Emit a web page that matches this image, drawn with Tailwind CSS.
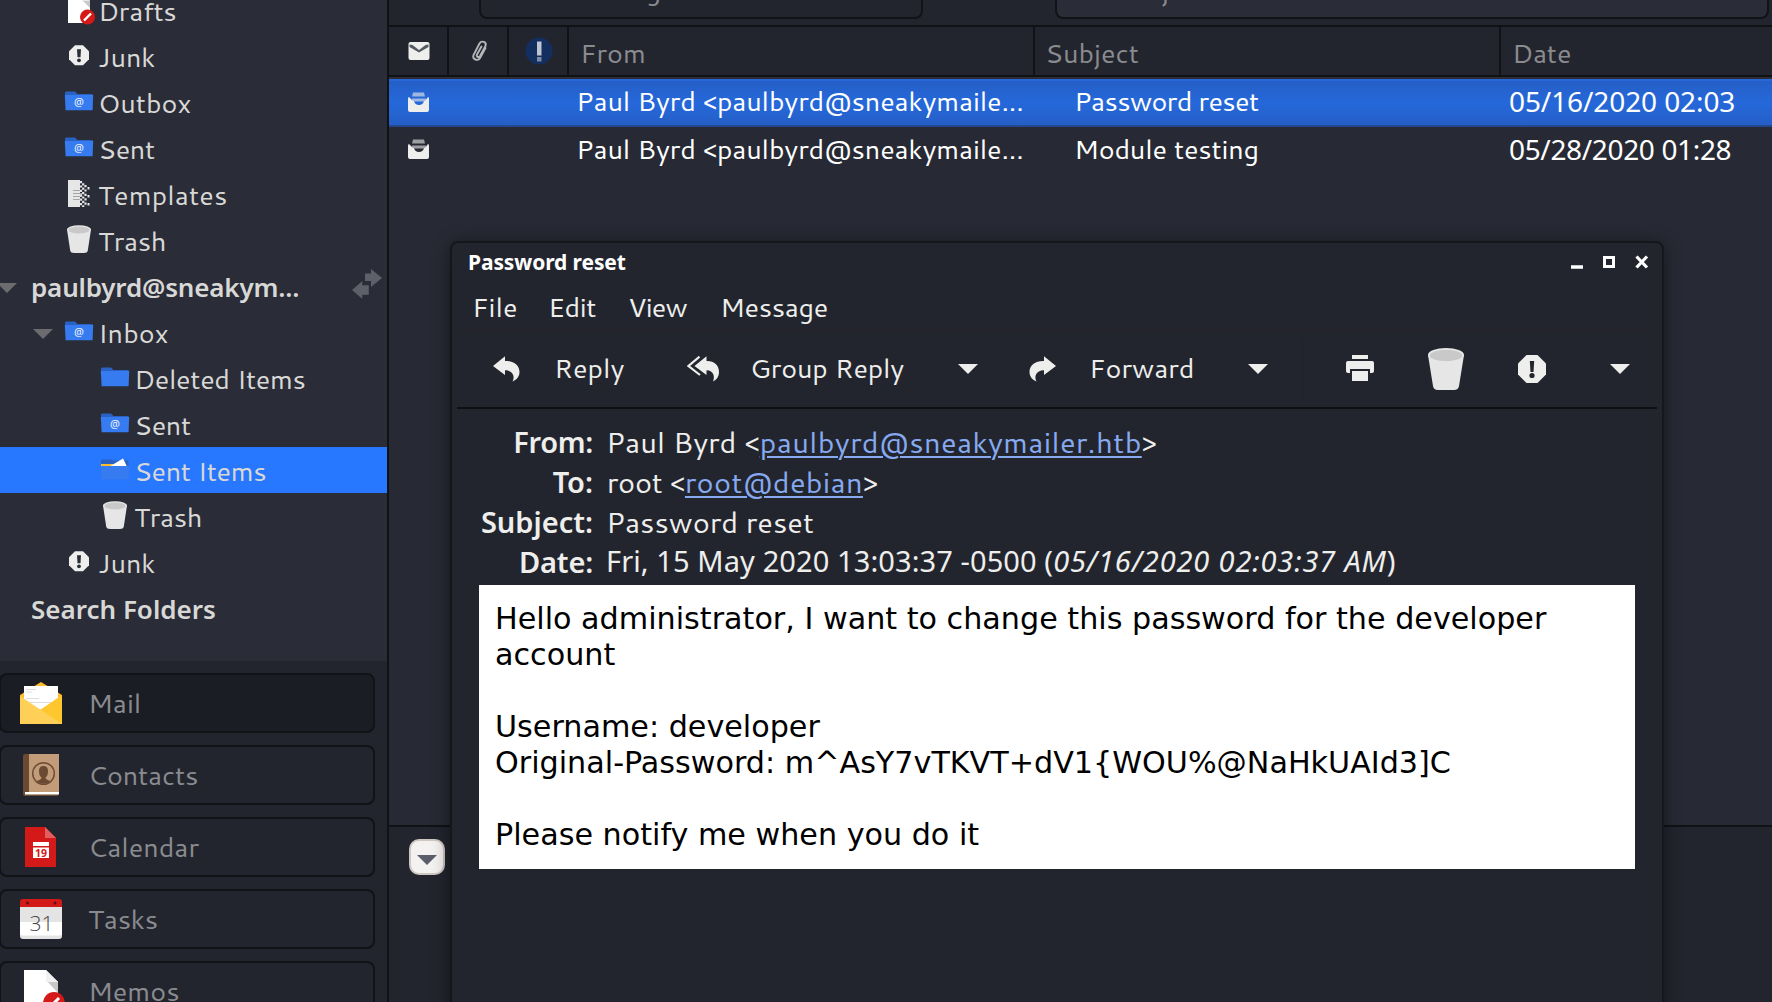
<!DOCTYPE html>
<html lang="en">
<head>
<meta charset="utf-8">
<title>Mail</title>
<script src="https://cdn.jsdelivr.net/npm/@tailwindcss/browser@4"></script>
</head>
<body class="h-[1002px] w-[1772px] overflow-hidden bg-[#22252e] font-[Cantarell,'Noto_Sans',sans-serif] text-[27px] whitespace-nowrap">

<svg class="hidden">
  <symbol id="folder" viewBox="0 0 32 46">
    <path fill="#2a62c4" d="M3 12.5h9l2.5 2.5h15v6H2V13.5z"/><path fill="#367bf0" d="M1.8 16h28.4l-.6 15.2H2.6z"/>
  </symbol>
  <symbol id="mailfolder" viewBox="0 0 32 46">
    <use href="#folder"/><text x="16" y="27.3" text-anchor="middle" font-family="Noto Sans" font-size="11" fill="#f3f6ff">@</text>
  </symbol>
  <symbol id="openfolder" viewBox="0 0 32 46">
    <path fill="#2a62c4" d="M3 12.5h9l2.5 1h15v6H2V13.5z"/><path fill="#fdbc2b" d="M2 17h15v2.500H2z"/><path fill="#fff" d="M10.500 19.500L24 11.500l4 8z"/><path fill="#367bf0" d="M1.8 19h28.4l-.6 13.5H2.6z"/>
  </symbol>
  <symbol id="junk" viewBox="0 0 32 46">
    <path fill="#eeeeec" d="M12 12.300h8l6 6v8l-6 6h-8l-6-6v-8z"/><path fill="#2a2c37" d="M14 16.300h4l-.5 8h-3z"/><circle cx="16" cy="27.300" r="1.900" fill="#2a2c37"/>
  </symbol>
  <symbol id="bin" viewBox="0 0 32 46">
    <path fill="#e6e6e6" d="M4 12.500l3.200 21q.4 2.500 4 2.500h9.600q3.600 0 4-2.500l3.200-21z"/><ellipse cx="16" cy="12.500" rx="12" ry="4.300" fill="#e6e6e6"/><ellipse cx="16" cy="13" rx="10.600" ry="3.500" fill="#c9c9c9"/>
  </symbol>
  <symbol id="draft" viewBox="0 0 32 46">
    <path fill="#fff" d="M5 9h14l8 8v19H5z"/><path fill="#c9c9c9" d="M19 13h8v8z"/><path fill="#e9e9e9" d="M19 9v5h8z"/><circle cx="24.500" cy="30" r="7.500" fill="#d41919"/><path stroke="#fff" stroke-width="2.400" d="M21 33.500l7-7"/>
  </symbol>
  <symbol id="template" viewBox="0 0 32 46">
    <path fill="#e6e6e6" d="M5 9h12v27H5z"/><path stroke="#a5a5a5" d="M10 19.500h9M10 22.500h9M10 25.500h9M10 28.500h9"/>
    <path stroke="#e6e6e6" stroke-width="2.200" stroke-dasharray="2.200 2.200" d="M18 10v26M22.500 14v22"/><path stroke="#e6e6e6" stroke-width="2.200" stroke-dasharray="2.200 2.200" d="M20.200 12.200V36"/><path stroke="#e6e6e6" stroke-width="2" stroke-dasharray="2.500 5.500" d="M25.500 16v19"/>
  </symbol>
  <symbol id="envopen" viewBox="0 0 24 24">
    <path fill="#eeeeec" d="M3 7l4 4h1q1 4 5 4t5-4h1l3-4q1 0 1 2v11q0 2-2 2H4q-2 0-2-2V9q0-2 1-2z"/><path fill="#eeeeec" fill-opacity=".6" d="M7 2.500h11l1 4H6zM6 8.500h14v3H6z"/>
  </symbol>
</svg>

<div class="flex h-full">
  <aside class="flex h-full w-[389px] shrink-0 flex-col overflow-hidden border-r-2 border-[#101216]">
    <nav class="h-[661px] shrink-0 overflow-hidden bg-[#2a2c37] text-[#d8d8d6]">
      <div class="-mt-[13px] leading-[48px]">
        <div class="flex h-[46px] pl-[63px]"><svg class="mr-[3px] h-[46px] w-8"><use href="#draft"/></svg><span class="tracking-[-0.3px]">Drafts</span></div>
        <div class="flex h-[46px] pl-[63px]"><svg class="mr-[3px] h-[46px] w-8"><use href="#junk"/></svg><span class="tracking-[-0.1px]">Junk</span></div>
        <div class="flex h-[46px] pl-[63px]"><svg class="mr-[3px] h-[46px] w-8"><use href="#mailfolder"/></svg><span>Outbox</span></div>
        <div class="flex h-[46px] pl-[63px]"><svg class="mr-[3px] h-[46px] w-8"><use href="#mailfolder"/></svg><span class="tracking-[-0.3px]">Sent</span></div>
        <div class="flex h-[46px] pl-[63px]"><svg class="mr-[3px] h-[46px] w-8"><use href="#template"/></svg><span class="tracking-[0.1px]">Templates</span></div>
        <div class="flex h-[46px] pl-[63px]"><svg class="mr-[3px] h-[46px] w-8"><use href="#bin"/></svg><span class="tracking-[-0.3px]">Trash</span></div>
        <div class="flex h-[46px]"><svg class="h-[46px] w-[31px]"><path fill="#6c6c70" d="M-3 20h20L7 30z"/></svg><span class="w-[321px] font-['Noto_Sans'] text-[26px] font-semibold tracking-[-0.18px]">paulbyrd@sneakym...</span><svg class="h-[46px] w-[31px]" fill="#5d6069"><path d="M13 10.500h6V6l11 9-11 9v-6h-6z"/><path stroke="#2a2c37" stroke-width="1.500" d="M-1 27l12-10.500v5h6.500v11H11v5z"/></svg></div>
        <div class="flex h-[46px]"><svg class="h-[46px] w-[63px]"><path fill="#6c6c70" d="M33 20h20L43 30z"/></svg><svg class="mr-[3px] h-[46px] w-8"><use href="#mailfolder"/></svg><span>Inbox</span></div>
        <div class="flex h-[46px] pl-[99px]"><svg class="mr-[3px] h-[46px] w-8"><use href="#folder"/></svg><span class="tracking-[-0.35px]">Deleted Items</span></div>
        <div class="flex h-[46px] pl-[99px]"><svg class="mr-[3px] h-[46px] w-8"><use href="#mailfolder"/></svg><span class="tracking-[-0.3px]">Sent</span></div>
        <div class="flex h-[46px] bg-[#2777ff] pl-[99px]"><svg class="mr-[3px] h-[46px] w-8"><use href="#openfolder"/></svg><span class="tracking-[-0.4px]">Sent Items</span></div>
        <div class="flex h-[46px] pl-[99px]"><svg class="mr-[3px] h-[46px] w-8"><use href="#bin"/></svg><span class="tracking-[-0.3px]">Trash</span></div>
        <div class="flex h-[46px] pl-[63px]"><svg class="mr-[3px] h-[46px] w-8"><use href="#junk"/></svg><span class="tracking-[-0.1px]">Junk</span></div>
        <div class="h-[46px] pl-[31px] font-['Noto_Sans'] text-[26px] font-semibold">Search Folders</div>
      </div>
    </nav>
    <div class="-ml-px flex w-[376px] flex-col gap-3 pt-3 text-[#8a8b8e]">
      <div class="flex h-[60px] shrink-0 items-center rounded-lg border-2 border-[#111317] bg-[#1b1d24] pl-[19px]">
        <svg class="mr-[26px] size-[42px]" viewBox="0 0 42 42"><path fill="#fdbc2b" d="M21 0l21 13v29H0V13z"/><path fill="#fff" d="M4 4h34v20L21 32 4 24z"/><path stroke="#ddd" d="M6 7.500h10M6 10h6M6 16.500h13M9 20.500h24"/><path fill="#ffc72e" d="M42 13v29L20 28z"/><path fill="#ffd057" d="M0 14l42 28H0z"/></svg><span>Mail</span>
      </div>
      <div class="flex h-[60px] shrink-0 items-center rounded-lg border-2 border-[#111317] pl-[19px]">
        <svg class="mr-[26px] size-[42px]" viewBox="0 0 42 42"><path fill="#6a4a33" d="M3 2q0-2 2-2h33v42H5q-2 0-2-2z"/><path fill="#c29b78" d="M9 0h30v38H9z"/><path fill="#fff" d="M5 38h34v2.500H5z"/><circle cx="23.500" cy="19.500" r="10.800" fill="none" stroke="#6a4a33" stroke-width="1.400"/><path fill="#6a4a33" d="M23.500 12q4.500 0 4.500 5t-2.500 6.500q0 2 5 3.500a10 10 0 0 1-14 0q5-1.500 5-3.500Q19 22 19 17t4.500-5z"/></svg><span class="tracking-[-0.2px]">Contacts</span>
      </div>
      <div class="flex h-[60px] shrink-0 items-center rounded-lg border-2 border-[#111317] pl-[19px]">
        <svg class="mr-[26px] size-[42px]" viewBox="0 0 42 42"><path fill="#d41919" d="M5 1h20l11 11v29H5z"/><path fill="#e35f5f" d="M25 1l11 11H25z"/><path fill="#fff" d="M13 16h16v4H13zM13 21.500h16V32H13z"/><text x="21" y="31" text-anchor="middle" font-family="Noto Sans" font-weight="700" font-size="10.500" fill="#d41919">19</text></svg><span>Calendar</span>
      </div>
      <div class="flex h-[60px] shrink-0 items-center rounded-lg border-2 border-[#111317] pl-[19px]">
        <svg class="mr-[26px] size-[42px]" viewBox="0 0 42 42"><path fill="#e4e4e4" d="M0 8h42v30q0 3-3 3H3q-3 0-3-3z"/><path fill="#fff" d="M0 24h42l.5 10q0 3-3 3.500h-37q-3-.5-3-3.500z"/><path fill="#d41919" d="M0 4q0-3 3-3h36q3 0 3 3v5H0z"/><circle cx="7.500" cy="5" r="1.500" fill="#601010"/><circle cx="35" cy="5" r="1.500" fill="#601010"/><text x="21.500" y="33" text-anchor="middle" font-family="Open Sans" font-weight="300" font-size="21" fill="#444">31</text></svg><span class="tracking-[-0.2px]">Tasks</span>
      </div>
      <div class="flex h-[60px] shrink-0 items-center rounded-lg border-2 border-[#111317] pl-[19px]">
        <svg class="mr-[26px] size-[42px] overflow-visible" viewBox="0 0 42 42"><path fill="#fff" d="M4 0h22l12 12v30H4z"/><path fill="#c9c9c9" d="M26 10l12 1v12z"/><path fill="#f0f0f0" d="M26 0v12h12z"/><circle cx="34" cy="33" r="11" fill="#d41919"/><path stroke="#fff" stroke-width="3" d="M29 38l10-10"/></svg><span>Memos</span>
      </div>
    </div>
  </aside>

  <main class="flex min-w-0 flex-1 flex-col bg-[#272a34]">
    <div class="flex h-[25px] shrink-0 overflow-hidden bg-[#22252e] pl-[90px] text-[#8a8b8e]">
      <div class="-mt-[41px] mr-[132px] h-[60px] w-[444px] shrink-0 rounded-lg border-2 border-[#111317] pl-[44px] leading-[56px]">All Messages</div>
      <div class="-mt-[41px] h-[60px] w-[714px] shrink-0 rounded-lg border-2 border-[#111317] bg-[#2a2c37] pl-[56px] leading-[57px]">Subject or Addresses contain</div>
    </div>
    <div class="flex h-[52px] shrink-0 border-y-2 border-[#101216] bg-[#22252e] leading-[51px] text-[#8a8b8e]">
      <div class="flex w-15 shrink-0 items-center border-r-2 border-[#101216] pl-[17px]"><svg class="size-6" viewBox="0 0 24 24"><rect x="2.500" y="3" width="21" height="18" rx="2" fill="#eeeeec"/><path fill="#555962" d="M3.500 5.500l3 .5 6.500 5 6.500-5 3-.5v2.500L13 13.500 3.500 8z"/></svg></div>
      <div class="flex w-15 shrink-0 items-center border-r-2 border-[#101216] pl-[18px]"><svg class="size-6" viewBox="0 0 24 24" fill="none" stroke="#b5b6b8" stroke-width="1.900" stroke-linecap="round"><path d="M18.500 9l-5.500 10c-2 3.500-8 1.500-6.500-3L12.500 4.500c2-3.500 7.500-1.500 6 2.500l-5.500 10c-1.500 2-4 .8-3-1.500l4.500-8"/></svg></div>
      <div class="flex w-15 shrink-0 items-center border-r-2 border-[#101216] pl-4"><svg class="size-7" viewBox="0 0 28 28"><circle cx="14" cy="14" r="13.500" fill="#132f5f"/><path fill="#c0c5d0" d="M12 4.500h4.500v14H12z"/><path fill="#7f8aa3" d="M12 20h4.500v4.500H12z"/></svg></div>
      <div class="w-[466px] shrink-0 border-r-2 border-[#101216] pl-[11px]">From</div>
      <div class="w-[466px] shrink-0 border-r-2 border-[#101216] pl-[10px]">Subject</div>
      <div class="pl-[11px] tracking-[-0.2px]">Date</div>
    </div>
    <div class="h-[2px] shrink-0 bg-[#2c2d35]"></div>
    <div class="flex h-12 shrink-0 border-t-2 border-b-2 border-t-[#2668da] border-b-[#24488f] bg-linear-to-b from-[#255fc7] via-[#2568da] to-[#255fc7] leading-[40px] text-white">
      <svg class="mt-[9px] ml-[17px] mr-[146px] size-6"><use href="#envopen"/></svg>
      <span class="w-[498px] tracking-[-0.15px]">Paul Byrd &lt;paulbyrd@sneakymaile...</span>
      <span class="w-[435px] tracking-[-0.65px]">Password reset</span>
      <span class="font-['Noto_Sans'] text-[28px] tracking-[-0.1px]">05/16/2020 02:03</span>
    </div>
    <div class="flex h-12 shrink-0 leading-[44px] text-white">
      <svg class="mt-[10px] ml-[17px] mr-[146px] size-6"><use href="#envopen"/></svg>
      <span class="w-[498px] tracking-[-0.15px]">Paul Byrd &lt;paulbyrd@sneakymaile...</span>
      <span class="w-[435px] tracking-[-0.2px]">Module testing</span>
      <span class="font-['Noto_Sans'] text-[28px] tracking-[-0.35px]">05/28/2020 01:28</span>
    </div>
    <div class="h-[650px] shrink-0"></div>
    <div class="flex-1 border-t-2 border-[#101216] bg-[#22252e] pt-3 pl-5">
      <svg class="size-9" viewBox="0 0 36 36"><rect x="1" y="1" width="34" height="34" rx="9" fill="#f3f2f1" stroke="#cdc6c1" stroke-width="2"/><path fill="#5a5e6b" d="M8 16h20L18 26z"/></svg>
    </div>
  </main>
</div>

<section class="absolute top-[241px] left-[450px] h-[780px] w-[1214px] rounded-t-lg border-2 border-[#15171c] bg-[#22252e] px-[5px] text-[#eeeeec] shadow-[0_2px_18px_rgba(0,0,0,0.45)]">
  <header class="flex h-10 items-center pl-[11px] text-white">
    <h1 class="flex-1 font-['Noto_Sans'] text-[21px] font-bold tracking-[-0.1px]">Password reset</h1>
    <svg class="mr-[7px] mb-[2px] h-5 w-[80px]" viewBox="0 0 80 20" fill="none" stroke="#fff"><path stroke-width="3.500" d="M1 15h12"/><path stroke-width="3" d="M34.500 5.500h9v9h-9z"/><path stroke-width="3.200" d="M66.500 4.500l10.500 11M77 4.500L66.500 15.500"/></svg>
  </header>
  <div class="flex h-[46px] pl-[15px] leading-[48px]">
    <span class="w-[76px] tracking-[0.1px]">File</span><span class="w-[80px] tracking-[-0.4px]">Edit</span><span class="w-[92px] tracking-[-0.8px]">View</span><span class="tracking-[-0.35px]">Message</span>
  </div>
  <div class="flex h-20 items-center border-t-2 border-b-2 border-t-[#25242c] border-b-[#0f1014] pl-[36px]">
    <svg class="mr-[33px] h-[26px] w-[28px]" viewBox="0 0 28 26" fill="#eeeeec"><path d="M0 10L12 .3V5c8.500-.3 14.500 4 14.500 11 0 4.500-3 8-7 9.500C22 21 20.500 14.500 12 14.300V19z"/></svg>
    <span class="-mt-px w-[133px]">Reply</span>
    <svg class="mr-[31px] h-[26px] w-8" viewBox="0 0 32 26" fill="#eeeeec"><path d="M7.500 10L19.500.3V5c7.500-.3 12.500 4 12.500 11 0 4.500-2.500 8-6 9.500C28 21 27 14.500 19.500 14.300V19z"/><path fill="none" stroke="#eeeeec" stroke-width="2.200" d="M12.500.7L1.500 10l11.500 9"/></svg>
    <span class="-mt-px w-[208px] tracking-[-0.2px]">Group Reply</span>
    <svg class="mr-[50px] h-[10px] w-5" viewBox="0 0 20 10"><path fill="#eeeeec" d="M0 0h20L10 10z"/></svg>
    <svg class="mr-[33px] h-[26px] w-[28px]" viewBox="0 0 28 26" fill="#eeeeec"><path d="M28 10L16 .3V5C7.500 4.700 1.500 9 1.500 16c0 4.500 3 8 7 9.500C6 21 7.500 14.500 16 14.300V19z"/></svg>
    <span class="-mt-px w-[159px]">Forward</span>
    <svg class="mr-[34px] h-[10px] w-5" viewBox="0 0 20 10"><path fill="#eeeeec" d="M0 0h20L10 10z"/></svg>
    <div class="mr-[43px] h-[60px] w-px bg-[#1f2129]"></div>
    <svg class="mr-[54px] mb-[2px] h-[26px] w-7" viewBox="0 0 28 26" fill="#eeeeec"><path d="M6 0h16v4H6zM2 6h24q2 0 2 2v8q0 2-2 2h-2v-4H4v4H2q-2 0-2-2V8q0-2 2-2zM6 16h16v10H6z"/></svg>
    <svg class="mr-[54px] mb-px h-[42px] w-9" viewBox="0 0 36 42"><path fill="#e6e6e6" d="M0 7l5 31q.6 4 5 4h16q4.400 0 5-4l5-31z"/><ellipse cx="18" cy="7" rx="18" ry="7" fill="#e6e6e6"/><ellipse cx="18" cy="7.500" rx="16.200" ry="5.700" fill="#c9c9c9"/></svg>
    <svg class="mr-[64px] mb-px h-7 w-7" viewBox="0 0 28 28"><path fill="#eeeeec" d="M8.500 0h11L28 8.500v11L19.500 28h-11L0 19.500v-11z"/><path fill="#22252e" d="M11.800 6h4.400l-.7 11h-3z"/><circle cx="14" cy="20.500" r="2.600" fill="#22252e"/></svg>
    <svg class="h-[10px] w-5" viewBox="0 0 20 10"><path fill="#eeeeec" d="M0 0h20L10 10z"/></svg>
  </div>
  <dl class="grid h-[176px] auto-rows-[40px] content-start grid-cols-[136px_1fr] gap-x-[14px] pt-[13px] text-[29px] leading-10">
    <dt class="text-right font-['Noto_Sans'] font-semibold tracking-[-0.3px]">From:</dt>
    <dd class="-ml-px tracking-[0.37px]"><span class="tracking-[0.05px]">Paul Byrd &lt;</span><a class="text-[#86a9ef] underline decoration-2 underline-offset-[3px]">paulbyrd@sneakymailer.htb</a>&gt;</dd>
    <dt class="text-right font-['Noto_Sans'] font-semibold">To:</dt>
    <dd class="tracking-[0.3px]"><span class="tracking-[-0.3px]">root &lt;</span><a class="text-[#86a9ef] underline decoration-2 underline-offset-[3px]">root@debian</a>&gt;</dd>
    <dt class="text-right font-['Noto_Sans'] font-semibold">Subject:</dt>
    <dd class="-ml-px">Password reset</dd>
    <dt class="text-right font-['Noto_Sans'] font-semibold tracking-[-0.2px]">Date:</dt>
    <dd class="-ml-px -mt-px font-['Noto_Sans'] tracking-[0.1px]">Fri, 15 May 2020 13:03:37 -0500 (<i class="tracking-[0.85px]">05/16/2020 02:03:37 AM</i>)</dd>
  </dl>
  <article class="mr-[22px] ml-[22px] h-[284px] bg-white pt-4 pr-[14px] pl-4 font-['DejaVu_Sans'] text-[30.200px] leading-9 whitespace-normal text-black">
    <p>Hello administrator, I want to change this password for the developer account</p>
    <p class="mt-9">Username: developer<br>Original-Password: m^AsY7vTKVT+dV1{WOU%@NaHkUAId3]C</p>
    <p class="mt-9">Please notify me when you do it</p>
  </article>
</section>
</body>
</html>
